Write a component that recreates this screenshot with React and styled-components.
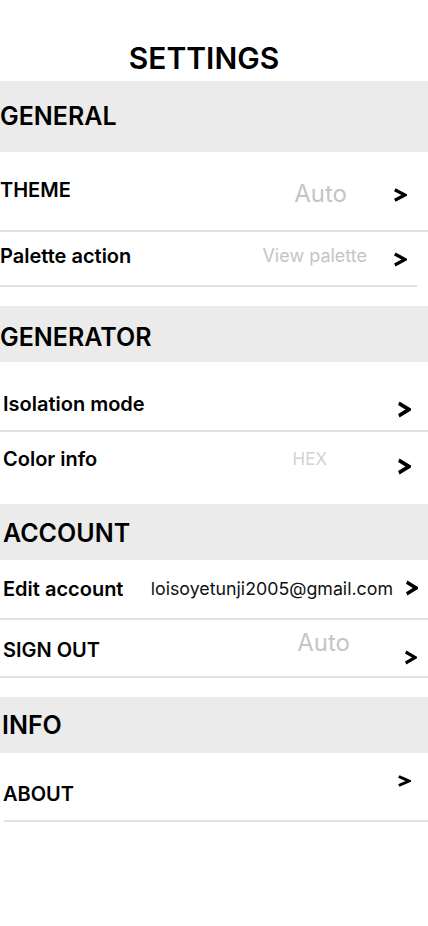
import React from "react";
import styled, { createGlobalStyle } from "styled-components";

const Global = createGlobalStyle`
  html, body { margin: 0; padding: 0; background: #ffffff; }
  body { font-family: Inter, "Noto Sans", "Liberation Sans", sans-serif; color: #000; }
  * { box-sizing: border-box; }
`;

const Page = styled.div`
  width: 428px;
  min-height: 926px;
  display: flex;
  flex-direction: column;
  background: #fff;
`;

const Title = styled.h1`
  margin: 0;
  height: 81px;
  padding: 43px 20px 0 0;
  text-align: center;
  font-size: 30px;
  line-height: 1;
  font-weight: 600;
  color: #000;
`;

const SectionHeader = styled.div`
  height: ${(p) => p.$h}px;
  padding-top: ${(p) => p.$pt}px;
  padding-left: ${(p) => p.$pl}px;
  margin-top: ${(p) => p.$mt || 0}px;
  background: #ebebeb;
  font-size: 25px;
  line-height: 1;
  font-weight: 600;
  color: #000;
`;

const Row = styled.div`
  height: ${(p) => p.$h}px;
  display: flex;
  align-items: flex-start;
  padding-left: ${(p) => p.$pl}px;
`;

const Label = styled.span`
  margin-top: ${(p) => p.$mt}px;
  font-size: 20px;
  line-height: 1;
  font-weight: 600;
  color: #000;
  white-space: nowrap;
`;

const Spacer = styled.div`
  flex: 1;
`;

const Value = styled.span`
  margin-top: ${(p) => p.$mt}px;
  margin-right: ${(p) => p.$gap}px;
  font-size: ${(p) => p.$size}px;
  line-height: 1;
  font-weight: 400;
  color: ${(p) => p.$color || "#c8c4c4"};
  white-space: nowrap;
`;

const ChevronBox = styled.svg`
  flex: none;
  margin-top: ${(p) => p.$mt}px;
  margin-right: ${(p) => p.$mr}px;
  width: ${(p) => p.$w}px;
  height: ${(p) => p.$h}px;
`;

const Divider = styled.div`
  height: 2px;
  background: #e4dfe1;
  margin-left: ${(p) => p.$left || 0}px;
  margin-right: ${(p) => p.$right || 0}px;
`;

function Chevron({ mt, mr, w = 14, h = 14 }) {
  return (
    <ChevronBox $mt={mt} $mr={mr} $w={w} $h={h} viewBox="0 0 14 14" preserveAspectRatio="none">
      <polyline
        points="1.8,1.8 12,7 1.8,12.2"
        fill="none"
        stroke="#000"
        strokeWidth="3.2"
        strokeLinejoin="miter"
        strokeLinecap="butt"
      />
    </ChevronBox>
  );
}

export default function App() {
  return (
    <Page>
      <Global />
      <Title>SETTINGS</Title>

      <SectionHeader $h={71} $pt={22.5} $pl={0}>GENERAL</SectionHeader>
      <Row $h={78} $pl={0}>
        <Label $mt={28}>THEME</Label>
        <Spacer />
        <Value $size={24} $mt={29.5} $gap={46}>Auto</Value>
        <Chevron mt={36} mr={21} w={14} h={14} />
      </Row>
      <Divider />
      <Row $h={53} $pl={0}>
        <Label $mt={14}>Palette action</Label>
        <Spacer />
        <Value $size={18} $mt={15} $gap={26}>View palette</Value>
        <Chevron mt={20} mr={21} w={14} h={15} />
      </Row>
      <Divider $right={11} />

      <SectionHeader $h={56} $pt={18.5} $pl={0} $mt={19}>GENERATOR</SectionHeader>
      <Row $h={68} $pl={3}>
        <Label $mt={32}>Isolation mode</Label>
        <Spacer />
        <Chevron mt={39} mr={17} w={14} h={17} />
      </Row>
      <Divider />
      <Row $h={72} $pl={3}>
        <Label $mt={17}>Color info</Label>
        <Spacer />
        <Value $size={17} $mt={18.5} $gap={70} $color="#d8d1d1">HEX</Value>
        <Chevron mt={26} mr={17} w={14} h={17} />
      </Row>

      <SectionHeader $h={56} $pt={16.5} $pl={3}>ACCOUNT</SectionHeader>
      <Row $h={58} $pl={3}>
        <Label $mt={19}>Edit account</Label>
        <Spacer />
        <Value $size={17.8} $mt={20} $gap={12} $color="#111">loisoyetunji2005@gmail.com</Value>
        <Chevron mt={20} mr={10} w={13} h={16} />
      </Row>
      <Divider />
      <Row $h={56} $pl={3}>
        <Label $mt={20}>SIGN OUT</Label>
        <Spacer />
        <Value $size={24} $mt={10.5} $gap={54}>Auto</Value>
        <Chevron mt={30} mr={11} w={13} h={15} />
      </Row>
      <Divider />

      <SectionHeader $h={56} $pt={15.5} $pl={2} $mt={19}>INFO</SectionHeader>
      <Row $h={67} $pl={3}>
        <Label $mt={31}>ABOUT</Label>
        <Spacer />
        <Chevron mt={22} mr={17} w={14} h={12} />
      </Row>
      <Divider $left={4} />
    </Page>
  );
}
